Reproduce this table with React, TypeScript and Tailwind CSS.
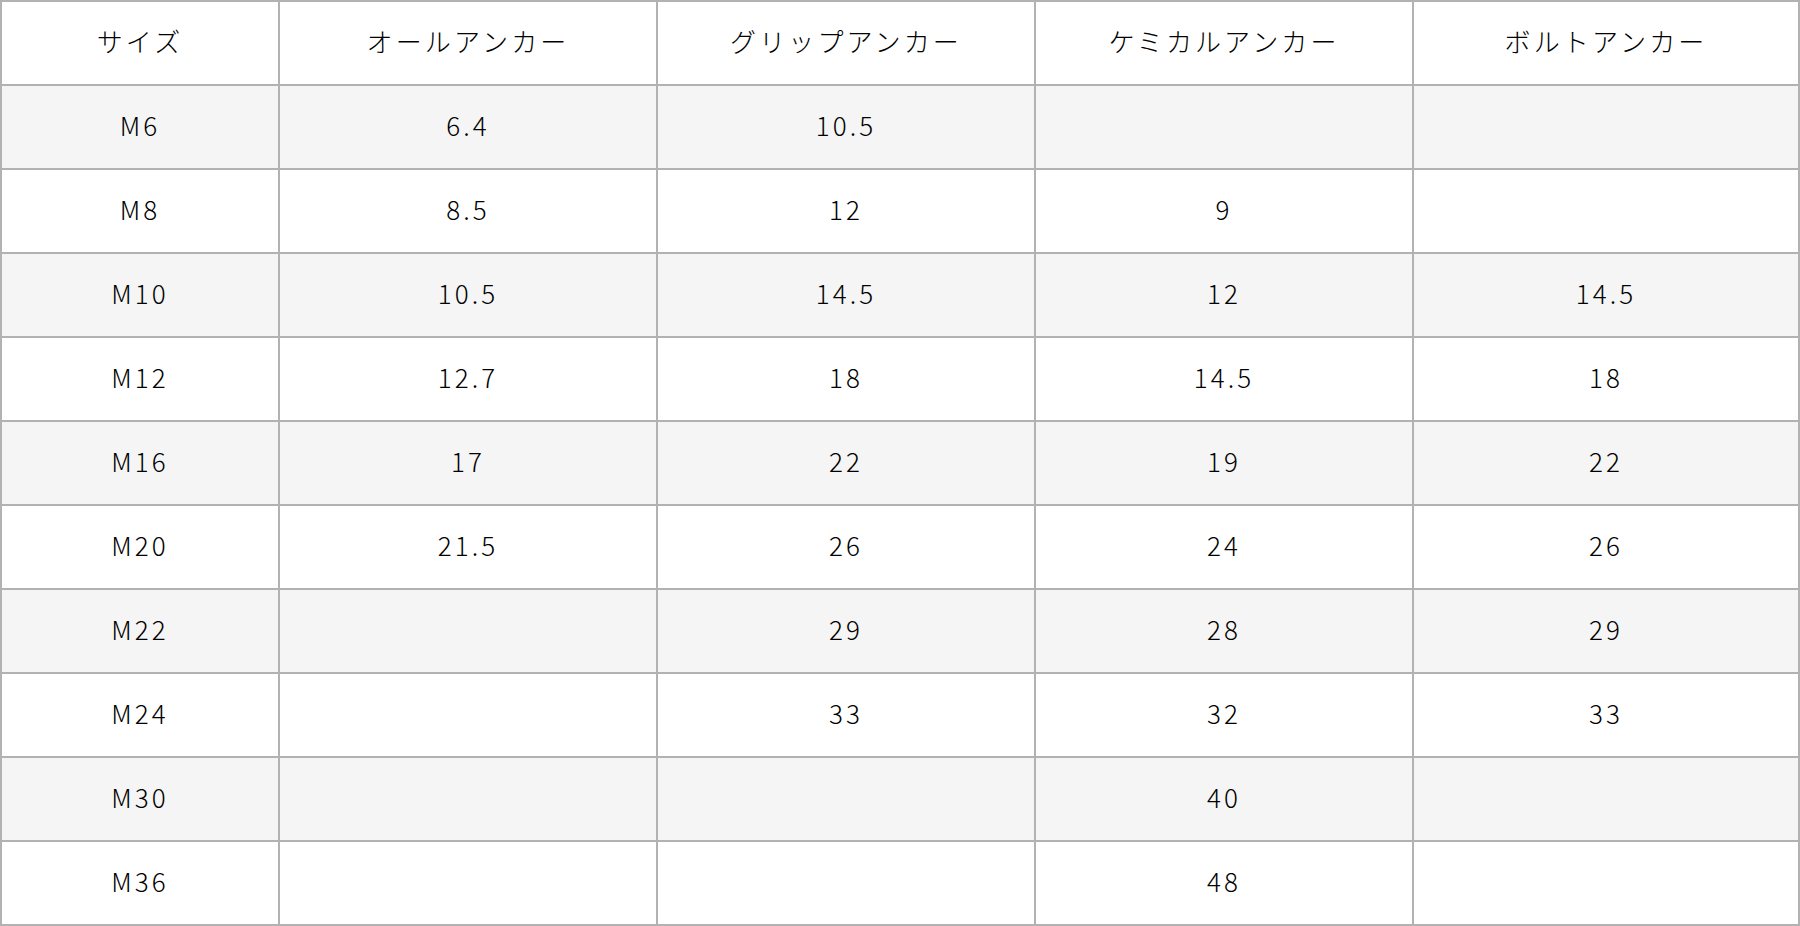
import React from 'react';

const headers = ['サイズ', 'オールアンカー', 'グリップアンカー', 'ケミカルアンカー', 'ボルトアンカー'];

const rows: string[][] = [
  ['M6', '6.4', '10.5', '', ''],
  ['M8', '8.5', '12', '9', ''],
  ['M10', '10.5', '14.5', '12', '14.5'],
  ['M12', '12.7', '18', '14.5', '18'],
  ['M16', '17', '22', '19', '22'],
  ['M20', '21.5', '26', '24', '26'],
  ['M22', '', '29', '28', '29'],
  ['M24', '', '33', '32', '33'],
  ['M30', '', '', '40', ''],
  ['M36', '', '', '48', ''],
];

const Cell: React.FC<{ text: string; shaded?: boolean }> = ({ text, shaded }) => (
  <div
    className={`flex items-center justify-center pb-[5px] text-[26px] font-light tracking-[0.12em] text-black ${
      shaded ? 'bg-[#f5f5f5]' : 'bg-white'
    }`}
  >
    {text}
  </div>
);

export default function App() {
  return (
    <div
      className="w-[1800px] h-[926px] bg-white"
      style={{ fontFamily: '"Noto Sans CJK JP", "Noto Sans", sans-serif' }}
    >
      <div className="grid grid-cols-[276px_376px_376px_376px_384px] auto-rows-[82px] gap-[2px] p-[2px] bg-[#b2b2b2]">
        {headers.map((h) => (
          <Cell key={h} text={h} />
        ))}
        {rows.map((r, i) =>
          r.map((v, j) => <Cell key={`${i}-${j}`} text={v} shaded={i % 2 === 0} />)
        )}
      </div>
    </div>
  );
}
